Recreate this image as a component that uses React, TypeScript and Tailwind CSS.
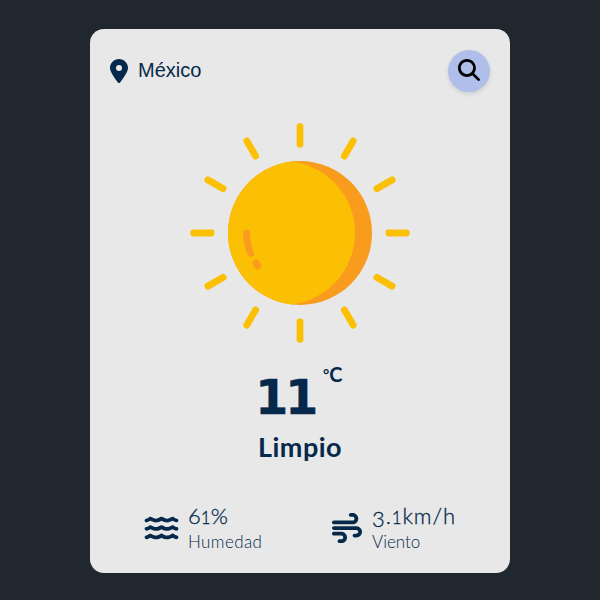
import { FaLocationDot, FaMagnifyingGlass, FaWater, FaWind } from 'react-icons/fa6';

const rays = [0, 30, 60, 90, 120, 150, 180, 210, 240, 270, 300, 330];

function Sun() {
  return (
    <svg width="220" height="220" viewBox="-110 -110 220 220" className="block">
      {rays.map((angle) => (
        <rect
          key={angle}
          x="-3.4"
          y="-109.7"
          width="6.8"
          height="24.2"
          rx="3.1"
          fill="#fbbf04"
          transform={`rotate(${angle})`}
        />
      ))}
      <circle r="72" fill="#f99b1c" />
      <path d="M-8.5 -71.5A72 72 0 0 0 -8.5 71.5A72 72 0 0 0 -8.5 -71.5Z" fill="#fbbf04" />
      <path d="M-53.4 0Q-53.4 11 -49.2 20.5" fill="none" stroke="#f99b1c" strokeWidth="6.8" strokeLinecap="round" />
      <path d="M-43.8 30.2L-42.4 32.6" stroke="#f99b1c" strokeWidth="7.4" strokeLinecap="round" />
    </svg>
  );
}

export default function App() {
  return (
    <main className="flex h-[600px] w-[600px] flex-col items-center bg-[#21272e] pt-[29px] font-['Lato',sans-serif] text-[#06284b]">
      <section className="flex h-[544px] w-[420px] flex-col rounded-[14px] bg-[#e8e8e8] px-5 pt-[21px]">
        <header className="flex h-[42px] items-center justify-between">
          <div className="flex items-center">
            <FaLocationDot className="h-6 w-[18px]" />
            <span className="mb-[2px] ml-[10px] font-['Liberation_Sans',sans-serif] text-[20px] leading-6">México</span>
          </div>
          <button className="flex h-[42px] w-[42px] items-center justify-center rounded-full bg-[#b0beea] pb-[2px] text-black shadow-[0_2px_4px_rgba(0,0,0,0.12)]">
            <FaMagnifyingGlass className="h-[22px] w-[22px]" />
          </button>
        </header>

        <div className="mt-[31px] flex justify-center">
          <Sun />
        </div>

        <div className="ml-[145px] mt-[20px] flex h-[60px]">
          <span className="mt-[4px] w-[60px] font-['DejaVu_Sans',sans-serif] text-[48px] leading-[60px] font-bold tracking-[-3.4px] [-webkit-text-stroke:0.3px_#06284b]">
            11
          </span>
          <span className="-mt-px ml-[8px] flex leading-6 font-bold">
            <span className="text-[15px]">°</span>
            <span className="text-[20px]">C</span>
          </span>
        </div>
        <h1 className="mt-[8px] text-center text-[27px] leading-8 font-bold tracking-[0.5px]">Limpio</h1>

        <div className="mt-[37px] flex">
          <div className="ml-[34px] flex w-[188px]">
            <FaWater className="mt-[13px] h-[30px] w-[35px]" />
            <div className="ml-[9px] pt-[2px]">
              <p className="h-7 text-[22px] leading-7 font-light [-webkit-text-stroke:0.3px_#06284b]">
                6<span className="text-[17px]">1</span>%
              </p>
              <p className="text-[17px] leading-6 font-light tracking-[0.4px]">Humedad</p>
            </div>
          </div>
          <div className="flex">
            <FaWind className="mt-[13px] h-[30px] w-[30px]" />
            <div className="ml-[10px] pt-[2px]">
              <p className="h-7 text-[22px] leading-7 font-light tracking-[0.9px] [-webkit-text-stroke:0.3px_#06284b]">
                <span className="relative top-[3px]">3</span>.<span className="text-[17px]">1</span>km/h
              </p>
              <p className="text-[17px] leading-6 font-light">Viento</p>
            </div>
          </div>
        </div>
      </section>
    </main>
  );
}
